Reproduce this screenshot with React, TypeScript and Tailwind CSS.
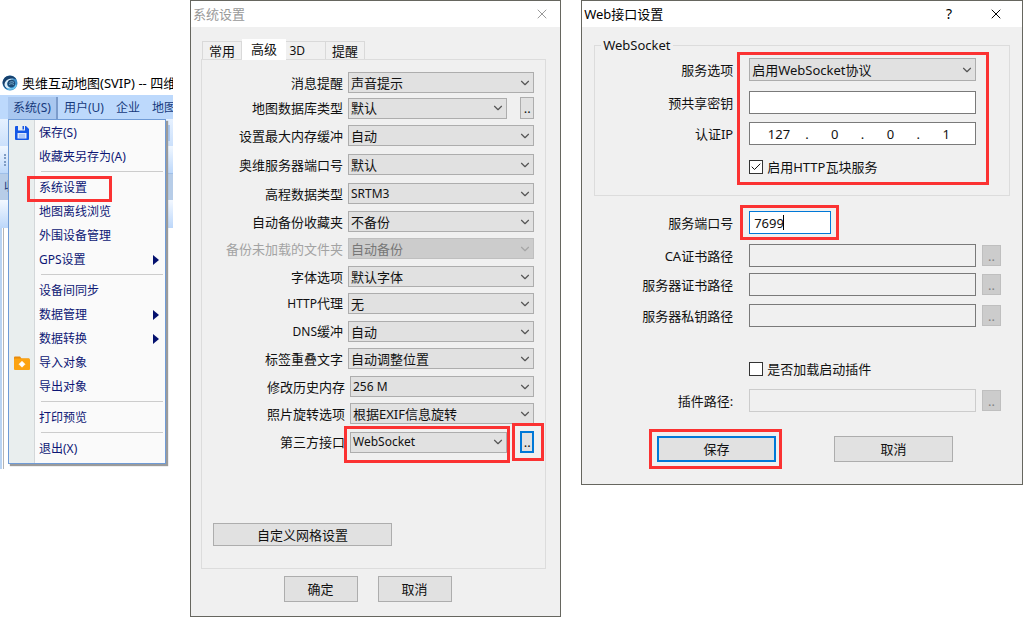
import type { ReactNode } from "react";
import clsx from "clsx";
import { Check, ChevronDown, X } from "lucide-react";

type MenuEntry = { label: string; icon?: "save" | "import"; submenu?: boolean; marked?: boolean };

const menuGroups: MenuEntry[][] = [
  [{ label: "保存(S)", icon: "save" }, { label: "收藏夹另存为(A)" }],
  [
    { label: "系统设置", marked: true },
    { label: "地图离线浏览" },
    { label: "外围设备管理" },
    { label: "GPS设置", submenu: true },
  ],
  [
    { label: "设备间同步" },
    { label: "数据管理", submenu: true },
    { label: "数据转换", submenu: true },
    { label: "导入对象", icon: "import" },
    { label: "导出对象" },
  ],
  [{ label: "打印预览" }],
  [{ label: "退出(X)" }],
];

type Setting = {
  label: string;
  value: string;
  gap: string;
  more?: boolean;
  disabled?: boolean;
  marked?: boolean;
  wide?: boolean;
  small?: boolean;
};

const settings: Setting[] = [
  { label: "消息提醒", value: "声音提示", gap: "mt-0" },
  { label: "地图数据库类型", value: "默认", gap: "mt-1", more: true },
  { label: "设置最大内存缓冲", value: "自动", gap: "mt-1.5" },
  { label: "奥维服务器端口号", value: "默认", gap: "mt-2" },
  { label: "高程数据类型", value: "SRTM3", gap: "mt-2", small: true },
  { label: "自动备份收藏夹", value: "不备份", gap: "mt-[7px]" },
  { label: "备份未加载的文件夹", value: "自动备份", gap: "mt-1.5", disabled: true },
  { label: "字体选项", value: "默认字体", gap: "mt-[7px]" },
  { label: "HTTP代理", value: "无", gap: "mt-1.5" },
  { label: "DNS缓冲", value: "自动", gap: "mt-[7px]" },
  { label: "标签重叠文字", value: "自动调整位置", gap: "mt-1.5" },
  { label: "修改历史内存", value: "256 M", gap: "mt-[7px]", wide: true, small: true },
  { label: "照片旋转选项", value: "根据EXIF信息旋转", gap: "mt-1.5", wide: true },
  { label: "第三方接口", value: "WebSocket", gap: "mt-[7px]", more: true, marked: true, wide: true, small: true },
];

const certPaths = [
  { id: "ca", label: "CA证书路径", gap: "mt-2.5" },
  { id: "server-cert", label: "服务器证书路径", gap: "mt-1.5" },
  { id: "server-key", label: "服务器私钥路径", gap: "mt-2" },
];

function Marker({ className }: { className: string }) {
  return <span className={clsx("pointer-events-none absolute z-10 border-3 border-[#fb3232]", className)} />;
}

function AppLogo() {
  return (
    <svg viewBox="0 0 16 16" className="h-4 w-4 shrink-0">
      <circle cx="8" cy="8" r="7.5" fill="#3a8cc8" />
      <path d="M.8 6A7.500 7.500 0 0 1 14.500 4.500C11 2.500 6 3 4 7.500 3 10 3.500 12 5 14 2 12.500 0 9 .8 6Z" fill="#17406c" />
      <path d="M2.500 10C2.500 5.500 6.500 2.800 12 4 8.500 4.300 5.500 6 5.200 9c0 2.500 2 4.300 5.300 4.300C7 14.500 3 13 2.500 10Z" fill="#dceffa" />
      <circle cx="9.300" cy="8.500" r="3.800" fill="#1d4a74" />
      <path d="M7.500 7.500c1.500-1 3-1 4.500 0M7 9.500c1.800-1 3.500-1 5 0" stroke="#8cc6ea" strokeWidth=".8" fill="none" />
      <path d="M5.500 13.800c4 1 7.500-.5 8.700-4" stroke="#6fc8ee" strokeWidth="1.300" fill="none" />
    </svg>
  );
}

function SaveIcon() {
  return (
    <svg viewBox="0 0 14 14" className="h-3.5 w-3.5">
      <path d="M0 1a1 1 0 0 1 1-1h10l3 3v10a1 1 0 0 1-1 1H1a1 1 0 0 1-1-1Z" fill="#1557e6" />
      <path d="M3 0h7v4.500H3Z" fill="#e9eeee" />
      <path d="M7.500 0h1.500v3.500H7.500Z" fill="#1557e6" />
      <path d="M2.500 7h9v5.500h-9Z" fill="#dbe7fc" />
      <path d="M4 9h6M4 11h6" stroke="#6d9bf2" strokeWidth=".8" />
    </svg>
  );
}

function ImportIcon() {
  return (
    <svg viewBox="0 0 16 14" className="h-3.5 w-4">
      <path d="M0 1.500A1 1 0 0 1 1 .5h5l1.500 2H15v4H0Z" fill="#e88a0c" />
      <rect x="0" y="2.500" width="16" height="11.500" rx="1" fill="#fca311" />
      <path d="M8 5.200 11 8.200 8 11.200 5 8.200Z" fill="#fff" stroke="#fff" strokeWidth=".6" />
    </svg>
  );
}

function MainMenu() {
  return (
    <div className="absolute top-full left-0 z-10 w-[158px] border border-[#6f9bd6] bg-[linear-gradient(to_right,#e9eeee_25px,#d3d7d9_25px,#d3d7d9_26px,#fafafa_26px)] pt-px pb-0.5 shadow-[2px_2px_1px_#9b9b9b]">
      {menuGroups.map((group, i) => (
        <div key={i}>
          {i > 0 && <div className="mt-0.5 mr-0.5 mb-1 ml-8 h-px bg-[#cccccc]" />}
          {group.map((entry) => (
            <button key={entry.label} className="relative flex h-6 w-full items-center text-left text-[#0d1775]">
              <span className="flex w-[25px] justify-center">
                {entry.icon === "save" && <SaveIcon />}
                {entry.icon === "import" && <ImportIcon />}
              </span>
              <span className="ml-[5px] flex-1">{entry.label}</span>
              {entry.submenu && (
                <svg viewBox="0 0 6 10" className="mr-1.5 h-2.5 w-1.5">
                  <path d="M0 0 6 5 0 10Z" fill="#04116e" />
                </svg>
              )}
              {entry.marked && <Marker className="top-0 -bottom-0.5 left-[18px] w-[85px]" />}
            </button>
          ))}
        </div>
      ))}
    </div>
  );
}

function MapWindow() {
  return (
    <div className="mt-[70px] mr-[17px] w-[173px] shrink-0 overflow-hidden text-xs leading-4 whitespace-nowrap">
      <div className="flex h-[25px] items-center gap-1 pl-0.5 text-[13px] text-black">
        <AppLogo />
        <span>奥维互动地图(SVIP) -- 四维</span>
      </div>
      <nav className="flex h-6 items-end bg-[#bdd9fc] pl-2 text-[#16397c]">
        <div className="relative">
          <button className="h-[22px] w-[50px] border-r-2 border-[#7c9ccb] bg-[#a9c7ef]">系统(S)</button>
          <MainMenu />
        </div>
        <button className="ml-1.5 h-[22px]">用户(U)</button>
        <button className="ml-3 h-[22px]">企业</button>
        <button className="ml-3 h-[22px]">地图</button>
      </nav>
      <div className="flex h-[27px] items-center justify-end bg-linear-to-b from-[#e6f1ff] to-[#cbe0fb] pr-[3px]">
        <span className="h-4 w-0.5 bg-[#a9c8f2]" />
      </div>
      <div className="flex h-7 items-center border-b border-[#9fbfe8] bg-linear-to-b from-[#f0f7ff] to-[#bdd8fa] pl-1">
        <span className="h-3 border-l-2 border-dotted border-[#7f9cc4]" />
      </div>
      <div className="flex h-[26px] items-center bg-[#b7cde8] pl-1 text-[#16397c]">收</div>
      <div className="h-7 bg-linear-to-b from-[#f3f8ff] to-[#bcd7fa]" />
      <div className="h-[241px] border-l-2 border-[#b9d3f2] bg-white">
        <div className="h-full w-0.5 border-r border-[#b4b4b4]" />
      </div>
    </div>
  );
}

function Dialog({ title, className, tools, faded, children }: { title: string; className: string; tools: ReactNode; faded?: boolean; children: ReactNode }) {
  return (
    <section className={clsx("min-w-0 border border-[#66665f] bg-[#f0f0f0] text-[13px] leading-4 text-[#111111]", className)}>
      <header className={clsx("flex h-[26px] items-center bg-white pl-0.5", faded ? "text-[#999999]" : "text-black")}>
        <h2 className="flex-1">{title}</h2>
        {tools}
      </header>
      {children}
    </section>
  );
}

function Select({ id, value, disabled, className }: { id: string; value: string; disabled?: boolean; className?: string }) {
  return (
    <div className="relative min-w-0 flex-1">
      <select
        id={id}
        disabled={disabled}
        className={clsx(
          "block w-full appearance-none border pl-0.5 opacity-100",
          disabled ? "border-[#bfbfbf] bg-[#cccccc] text-[#777777]" : "border-[#adadad] bg-[#e1e1e1] text-[#111111]",
          className,
        )}
      >
        <option>{value}</option>
      </select>
      <ChevronDown
        strokeWidth={2}
        className={clsx("pointer-events-none absolute top-1/2 right-0.5 h-3.5 w-3.5 -translate-y-1/2", disabled ? "text-[#a5a5a5]" : "text-[#555555]")}
      />
    </div>
  );
}

function SettingRow({ setting, index }: { setting: Setting; index: number }) {
  const id = `setting-${index}`;
  const prefix = setting.label.match(/^[A-Z]+/)?.[0] ?? "";
  return (
    <div className={clsx("flex items-center gap-[5px]", setting.gap)}>
      <label
        htmlFor={id}
        className={clsx("shrink-0 text-right whitespace-nowrap", setting.wide ? "w-[143px]" : "w-[141px]", setting.disabled && "text-[#a3a3a3]")}
      >
        {prefix && <span className="text-xs">{prefix}</span>}
        {setting.label.slice(prefix.length)}
      </label>
      <div className="relative flex min-w-0 flex-1">
        <Select id={id} value={setting.value} disabled={setting.disabled} className={clsx("h-[21px]", setting.small && "text-xs")} />
        {setting.marked && <Marker className="-top-1.5 -right-[3px] -bottom-2.5 -left-1.5" />}
      </div>
      {setting.more && (
        <div className="relative ml-2 flex">
          <button
            aria-label={`${setting.label}选项`}
            className={clsx("h-[22px] w-3.5 bg-[#e1e1e1] leading-4", setting.marked ? "border-2 border-[#0078d7]" : "border border-[#adadad]")}
          >
            <span className="flex justify-center">..</span>
          </button>
          {setting.marked && <Marker className="-top-2 -right-2.5 -bottom-2 -left-2" />}
        </div>
      )}
    </div>
  );
}

function SystemDialog() {
  const tab = "h-[18px] border border-b-0 border-[#d9d9d9] bg-[#f0f0f0]";
  return (
    <Dialog title="系统设置" faded className="mr-5 flex-[371]" tools={<button aria-label="关闭" className="mr-2.5"><X strokeWidth={1.5} className="h-4 w-4" /></button>}>
      <div className="pt-3 pr-3 pb-[14px] pl-2.5">
        <div role="tablist" className="flex items-end pl-px">
          <button role="tab" className={clsx(tab, "w-10 leading-[14px]")}>常用</button>
          <button role="tab" aria-selected className="-mb-px h-[21px] w-11 bg-white pb-0.5">高级</button>
          <button role="tab" className={clsx(tab, "w-10 border-l-0 pr-5 text-right text-xs")}>3D</button>
          <button role="tab" className={clsx(tab, "-ml-px w-10 leading-[14px]")}>提醒</button>
        </div>
        <div className="mr-0.5 border border-[#dcdcdc] pt-3 pr-[11px] pb-[22px]">
          {settings.map((setting, index) => (
            <SettingRow key={setting.label} setting={setting} index={index} />
          ))}
          <button className="mt-[70px] ml-[11px] h-[23px] w-[179px] border border-[#adadad] bg-[#e1e1e1]">自定义网格设置</button>
        </div>
        <div className="mt-[7px] flex justify-center gap-5 pr-3.5">
          <button className="h-[26px] w-[74px] border border-[#adadad] bg-[#e1e1e1]">确定</button>
          <button className="h-[26px] w-[74px] border border-[#adadad] bg-[#e1e1e1]">取消</button>
        </div>
      </div>
    </Dialog>
  );
}

function BrowseButton({ label }: { label: string }) {
  return (
    <button disabled aria-label={`浏览${label}`} className="ml-1.5 h-[21px] w-[19px] border border-[#bfbfbf] bg-[#cccccc] text-[#838383]">
      ..
    </button>
  );
}

function WebDialog() {
  const label = "shrink-0 text-right whitespace-nowrap";
  const box = "h-[23px] border border-[#7a7a7a]";
  return (
    <Dialog
      title="Web接口设置"
      className="mr-px flex-[442]"
      tools={
        <>
          <button aria-label="帮助" className="mr-9 text-sm">?</button>
          <button aria-label="关闭" className="mr-[18px]"><X strokeWidth={1.5} className="h-4 w-4" /></button>
        </>
      }
    >
      <fieldset className="mx-3 mt-2.5 border border-[#dcdcdc] pt-[5px] pr-[33px] pb-5">
        <legend className="ml-1.5 px-0.5">WebSocket</legend>
        <div className="relative">
          <div className="flex items-center gap-4">
            <label htmlFor="service" className={clsx(label, "w-[138px]")}>服务选项</label>
            <Select id="service" value="启用WebSocket协议" className="h-[23px]" />
          </div>
          <div className="mt-2.5 flex items-center gap-4">
            <label htmlFor="secret" className={clsx(label, "w-[138px]")}>预共享密钥</label>
            <input id="secret" className={clsx(box, "min-w-0 flex-1 bg-white")} />
          </div>
          <div className="mt-2 flex items-center gap-4">
            <label htmlFor="ip-0" className={clsx(label, "w-[138px]")}>认证IP</label>
            <div className={clsx(box, "flex min-w-0 flex-1 items-center bg-white px-[3px]")}>
              {["127", "0", "0", "1"].map((part, i) => (
                <div key={i} className="contents">
                  {i > 0 && <span className="w-1 text-center">.</span>}
                  <input id={`ip-${i}`} aria-label={`IP ${i + 1}`} defaultValue={part} className="w-0 min-w-0 flex-1 text-center" />
                </div>
              ))}
            </div>
          </div>
          <label className="mt-3.5 ml-[154px] flex items-center gap-1">
            <span className="relative flex">
              <input type="checkbox" defaultChecked className="peer h-3.5 w-3.5 appearance-none border border-[#333333] bg-white" />
              <Check strokeWidth={2} className="pointer-events-none absolute top-px left-px hidden h-3 w-3 peer-checked:block" />
            </span>
            启用HTTP瓦块服务
          </label>
          <Marker className="-top-1.5 -right-[13px] -bottom-2.5 left-[142px]" />
        </div>
      </fieldset>
      <div className="pt-[15px] pr-[21px] pb-[22px]">
        <div className="flex items-center gap-4">
          <label htmlFor="port" className={clsx(label, "w-[151px]")}>服务端口号</label>
          <div className="relative flex w-[82px]">
            <input id="port" defaultValue="7699" className="h-[23px] w-full border border-[#0078d7] bg-white pl-1" />
            <span className="pointer-events-none absolute top-1 left-[34px] h-[15px] w-px bg-black" />
            <Marker className="-top-1.5 -right-2 -bottom-1.5 -left-[9px]" />
          </div>
        </div>
        {certPaths.map((path) => (
          <div key={path.id} className={clsx("flex items-center", path.gap)}>
            <label htmlFor={path.id} className={clsx(label, "mr-4 w-[151px]")}>{path.label}</label>
            <input id={path.id} disabled className={clsx(box, "min-w-0 flex-1 bg-[#f0f0f0]")} />
            <BrowseButton label={path.label} />
          </div>
        ))}
        <label className="mt-[34px] ml-[167px] flex items-center gap-1">
          <input type="checkbox" className="h-3.5 w-3.5 appearance-none border border-[#333333] bg-white" />
          是否加载启动插件
        </label>
        <div className="mt-3 flex items-center">
          <label htmlFor="plugin" className={clsx(label, "mr-4 w-[151px]")}>插件路径:</label>
          <input id="plugin" disabled className="h-[23px] min-w-0 flex-1 border border-[#cccccc] bg-[#f0f0f0]" />
          <BrowseButton label="插件路径" />
        </div>
        <div className="mt-6 ml-[27px] flex justify-center gap-[58px]">
          <div className="relative">
            <button className="h-[26px] w-[119px] border-2 border-[#0078d7] bg-[#e1e1e1]">保存</button>
            <Marker className="-top-[7px] -right-1.5 -bottom-[7px] -left-2" />
          </div>
          <button className="h-[26px] w-[119px] border border-[#adadad] bg-[#e1e1e1]">取消</button>
        </div>
      </div>
    </Dialog>
  );
}

export default function App() {
  return (
    <main className="flex items-start bg-white font-['Noto_Sans','Noto_Sans_CJK_SC',sans-serif]">
      <MapWindow />
      <SystemDialog />
      <WebDialog />
    </main>
  );
}
